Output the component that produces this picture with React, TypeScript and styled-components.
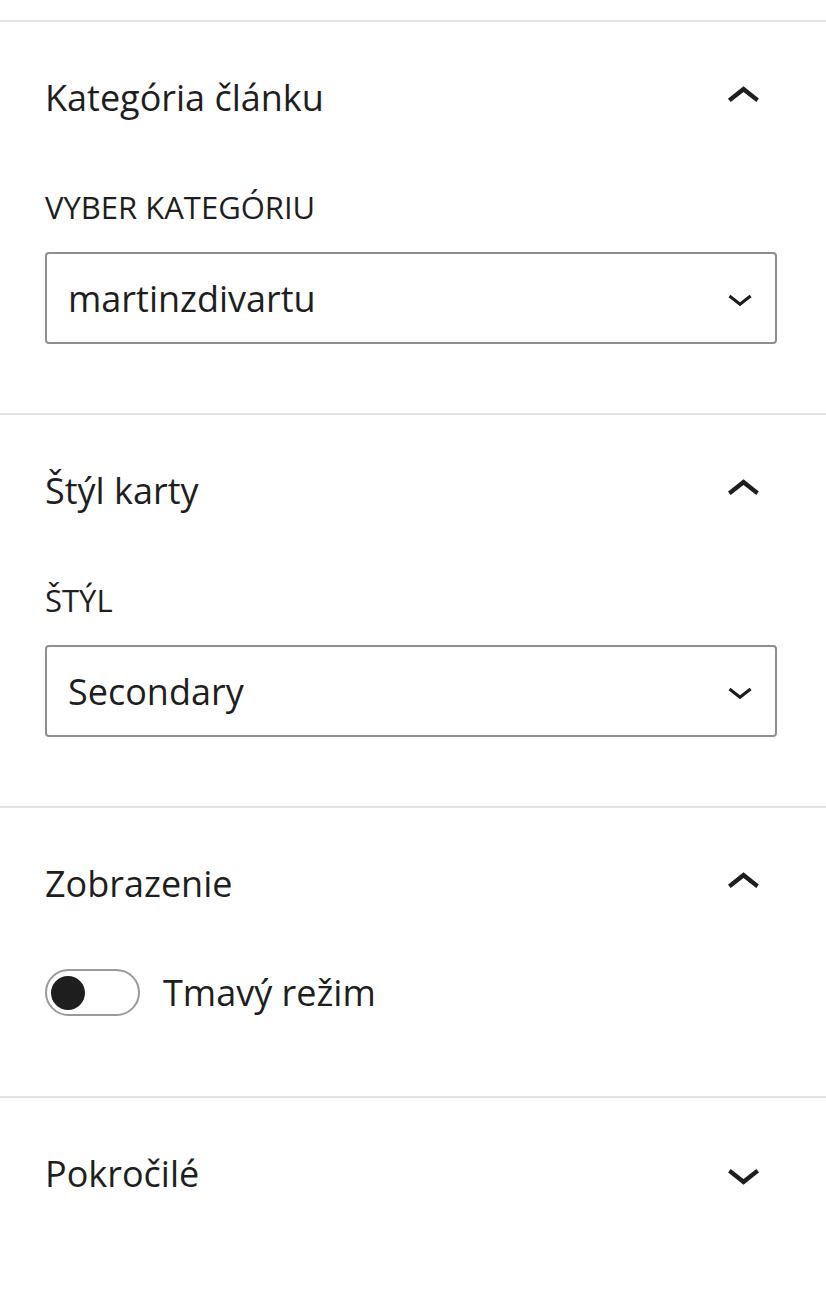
import React from "react";
import styled, { createGlobalStyle } from "styled-components";

const GlobalStyle = createGlobalStyle`
  html, body {
    margin: 0;
    padding: 0;
    background: #ffffff;
  }
  body {
    font-family: "Open Sans", "Noto Sans", "Liberation Sans", sans-serif;
    color: #1e1e1e;
  }
`;

const Sidebar = styled.div`
  width: 826px;
  padding-top: 20px;
  box-sizing: border-box;
`;

const Panel = styled.section<{ $bottom: number }>`
  border-top: 2px solid #e2e2e2;
  padding: 0 49px ${(p) => p.$bottom}px 45px;
`;

const Header = styled.div`
  height: 150px;
  display: flex;
  align-items: center;
  justify-content: space-between;
`;

const Title = styled.h2`
  margin: 0;
  font-size: 36px;
  font-weight: 400;
  color: #1e1e1e;
`;

const IconSvg = styled.svg<{ $size: number }>`
  width: ${(p) => p.$size}px;
  height: ${(p) => p.$size}px;
  fill: #1e1e1e;
  flex: none;
`;

const Label = styled.label`
  display: block;
  margin-top: 20px;
  height: 30px;
  line-height: 30px;
  font-size: 31px;
  text-transform: uppercase;
  color: #1e1e1e;
`;

const SelectWrap = styled.div`
  position: relative;
  margin-top: 30px;
`;

const Select = styled.select`
  appearance: none;
  width: 100%;
  height: 92px;
  box-sizing: border-box;
  border: 2px solid #8f8f8f;
  border-radius: 4px;
  padding: 0 70px 0 21px;
  background: #ffffff;
  font-family: inherit;
  font-size: 36px;
  color: #1e1e1e;
  outline: none;
`;

const SelectIcon = styled.span`
  position: absolute;
  right: 12px;
  top: 50%;
  transform: translateY(-50%);
  display: flex;
  pointer-events: none;
`;

const ToggleRow = styled.div`
  display: flex;
  align-items: center;
  margin-top: 10px;
`;

const Track = styled.span`
  display: flex;
  align-items: center;
  width: 95px;
  height: 47px;
  box-sizing: border-box;
  border: 2px solid #9a9a9a;
  border-radius: 24px;
  padding-left: 4px;
  flex: none;
`;

const Knob = styled.span`
  width: 34px;
  height: 34px;
  border-radius: 50%;
  background: #1e1e1e;
`;

const ToggleLabel = styled.span`
  margin-left: 23px;
  font-size: 36px;
  color: #1e1e1e;
`;

const ChevronUp = ({ size }: { size: number }) => (
  <IconSvg $size={size} viewBox="0 0 24 24" aria-hidden="true">
    <path d="M6.5 12.4L12 8l5.5 4.4-.9 1.2L12 10l-4.6 3.6-1-1.2z" />
  </IconSvg>
);

const ChevronDown = ({ size }: { size: number }) => (
  <IconSvg $size={size} viewBox="0 0 24 24" aria-hidden="true">
    <path d="M17.5 11.6L12 16l-5.5-4.4.9-1.2L12 14l4.6-3.6 1 1.2z" />
  </IconSvg>
);

const SelectField = ({ label, value }: { label: string; value: string }) => (
  <>
    <Label>{label}</Label>
    <SelectWrap>
      <Select defaultValue={value}>
        <option value={value}>{value}</option>
      </Select>
      <SelectIcon>
        <ChevronDown size={50} />
      </SelectIcon>
    </SelectWrap>
  </>
);

export default function App() {
  return (
    <>
      <GlobalStyle />
      <Sidebar>
        <Panel $bottom={69}>
          <Header>
            <Title>Kategória článku</Title>
            <ChevronUp size={67} />
          </Header>
          <SelectField label="Vyber kategóriu" value="martinzdivartu" />
        </Panel>
        <Panel $bottom={69}>
          <Header>
            <Title>Štýl karty</Title>
            <ChevronUp size={67} />
          </Header>
          <SelectField label="Štýl" value="Secondary" />
        </Panel>
        <Panel $bottom={79}>
          <Header>
            <Title>Zobrazenie</Title>
            <ChevronUp size={67} />
          </Header>
          <ToggleRow>
            <Track>
              <Knob />
            </Track>
            <ToggleLabel>Tmavý režim</ToggleLabel>
          </ToggleRow>
        </Panel>
        <Panel $bottom={0}>
          <Header>
            <Title>Pokročilé</Title>
            <ChevronDown size={67} />
          </Header>
        </Panel>
      </Sidebar>
    </>
  );
}
